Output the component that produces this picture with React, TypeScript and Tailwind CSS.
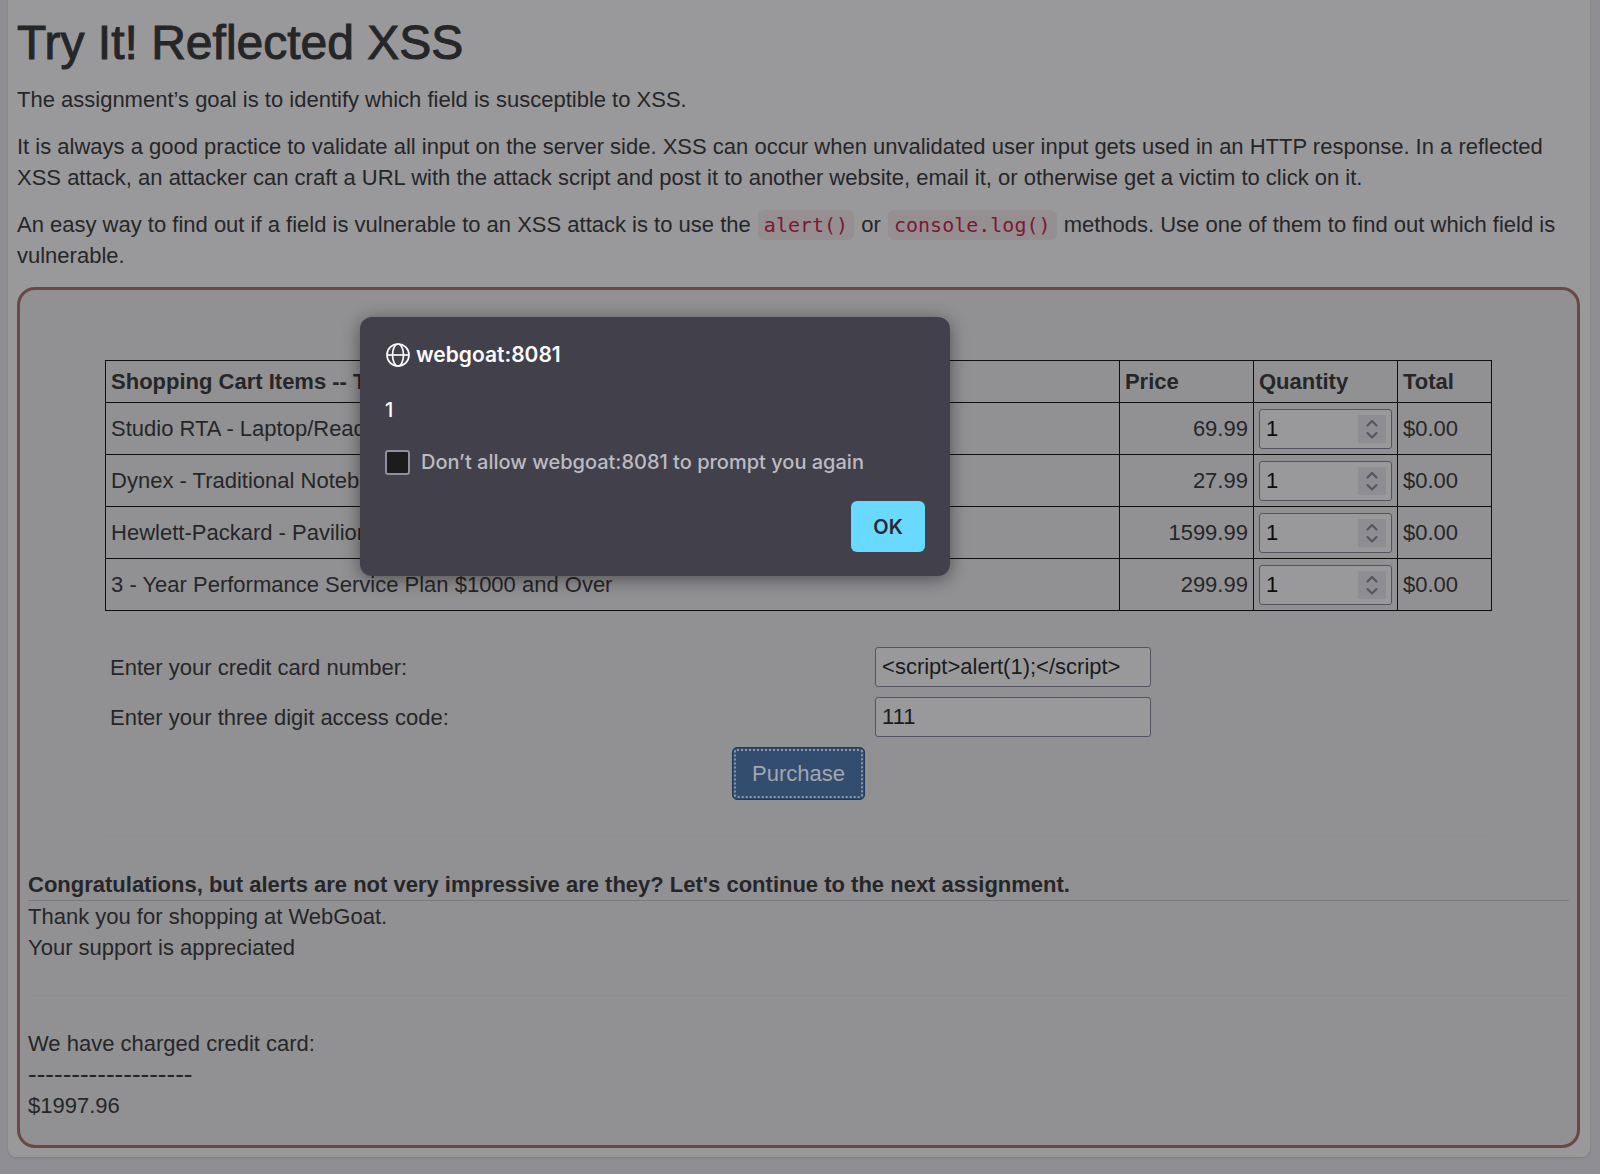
import React, { useState } from 'react';

interface CartItem {
  name: string;
  price: string;
}

const cartItems: CartItem[] = [
  { name: 'Studio RTA - Laptop/Reading Cart with Tilting Surface - Cherry', price: '69.99' },
  { name: 'Dynex - Traditional Notebook Case', price: '27.99' },
  { name: 'Hewlett-Packard - Pavilion Notebook with Intel Centrino', price: '1599.99' },
  { name: '3 - Year Performance Service Plan $1000 and Over', price: '299.99' },
];

const Code: React.FC<{ children: React.ReactNode }> = ({ children }) => (
  <code className="mx-px rounded-md bg-[#958f92] px-1.5 py-[3px] font-['DejaVu_Sans_Mono',monospace] text-xl leading-none text-[#7c1735]">
    {children}
  </code>
);

const QuantityInput: React.FC<{ label: string }> = ({ label }) => (
  <div className="flex h-10 items-center rounded-[3px] border border-[#55535f] bg-[#99999b] pr-[5px] pl-1.5">
    <input
      type="number"
      aria-label={label}
      defaultValue={1}
      className="w-0 flex-1 appearance-none bg-transparent text-[#0c0c0d] outline-none [-moz-appearance:textfield] [&::-webkit-inner-spin-button]:appearance-none"
    />
    <svg className="size-7 bg-[#8e8d93]" viewBox="0 0 28 28" fill="none" stroke="#55535f" strokeWidth="2">
      <path d="M9.5 10.5l4.5-4.5 4.5 4.5M9.5 18l4.5 4.5 4.5-4.5" strokeLinecap="round" strokeLinejoin="round" />
    </svg>
  </div>
);

const CartTable: React.FC = () => (
  <table className="mx-auto w-[90%] table-fixed border-collapse border border-[#0f0f10]">
    <colgroup>
      <col />
      <col className="w-[134px]" />
      <col className="w-[144px]" />
      <col className="w-[94px]" />
    </colgroup>
    <thead>
      <tr className="h-[42px] text-left">
        {['Shopping Cart Items -- To Buy Now', 'Price', 'Quantity', 'Total'].map((title) => (
          <th key={title} className="border border-[#0f0f10] px-[5px] font-bold">
            {title}
          </th>
        ))}
      </tr>
    </thead>
    <tbody>
      {cartItems.map((item) => (
        <tr key={item.name} className="h-[52px]">
          <td className="border border-[#0f0f10] px-[5px]">{item.name}</td>
          <td className="border border-[#0f0f10] px-[5px] text-right">{item.price}</td>
          <td className="border border-[#0f0f10] px-[5px]">
            <QuantityInput label={`Quantity of ${item.name}`} />
          </td>
          <td className="border border-[#0f0f10] px-[5px]">$0.00</td>
        </tr>
      ))}
    </tbody>
  </table>
);

const PaymentForm: React.FC = () => {
  const fieldClass =
    'h-10 w-[276px] rounded-[3px] border border-[#55535f] bg-[#99999b] px-1.5 text-[#1b1b1c] outline-none';

  return (
    <form className="mx-auto mt-9 w-[90%]" onSubmit={(e) => e.preventDefault()}>
      <div className="grid grid-cols-[765px_1fr] items-center gap-y-2.5 pl-[5px]">
        <label htmlFor="card">Enter your credit card number:</label>
        <input id="card" type="text" defaultValue="<script>alert(1);</script>" className={fieldClass} />
        <label htmlFor="code">Enter your three digit access code:</label>
        <input id="code" type="text" defaultValue="111" className={fieldClass} />
      </div>
      <div className="mt-2.5 text-center">
        <button
          type="submit"
          className="h-[53px] rounded-[5px] border border-[#1f3a60] bg-[#334d70] p-px text-[#a3a6ac]"
        >
          <span className="flex h-full items-center rounded-[3px] border-2 border-dotted border-[#8c97a8] px-4">
            Purchase
          </span>
        </button>
      </div>
    </form>
  );
};

const GlobeIcon: React.FC = () => (
  <svg className="size-6" viewBox="0 0 24 24" fill="none" stroke="#fbfbfe" strokeWidth="1.7">
    <circle cx="12" cy="12" r="11" />
    <ellipse cx="12" cy="12" rx="5.5" ry="11" />
    <path d="M1 12h22" />
  </svg>
);

const AlertDialog: React.FC<{ onClose: () => void }> = ({ onClose }) => (
  <div
    role="dialog"
    aria-label="webgoat:8081"
    className="absolute top-[317px] left-[360px] flex h-[259px] w-[590px] flex-col rounded-xl bg-[#42404b] px-[25px] pt-[25px] pb-6 font-[Inter,sans-serif] text-xl leading-[26px] text-[#fbfbfe] shadow-[0_3px_18px_rgba(0,0,0,0.45)]"
  >
    <div className="flex items-center gap-1.5 pl-px text-[21px] font-semibold">
      <GlobeIcon />
      webgoat:8081
    </div>
    <p className="mt-[29px] font-medium">1</p>
    <label className="mt-[26px] flex items-center gap-[11px] text-[#bcbbc1]">
      <input
        type="checkbox"
        className="size-[25px] appearance-none rounded-[3px] border-2 border-[#8f8f9d] bg-[#1c1c1c] checked:bg-[#6ad9ff]"
      />
      <span className="font-medium">Don’t allow webgoat:8081 to prompt you again</span>
    </label>
    <button
      type="button"
      onClick={onClose}
      className="mt-auto h-[51px] w-[74px] self-end rounded-md bg-[#69d9ff] text-xl font-semibold text-[#2b2a33]"
    >
      OK
    </button>
  </div>
);

export default function App() {
  const [dialogOpen, setDialogOpen] = useState(true);

  return (
    <div className="relative min-h-screen bg-[#8f8e94] pr-2.5 pb-4 pl-2 font-['Liberation_Sans',Arial,sans-serif] text-[22px] leading-[31px] text-[#262628]">
      <main className="rounded-b-lg bg-[#99999b] pt-[18px] pr-2.5 pb-[9px] pl-[9px] shadow-sm">
        <h1 className="text-5xl leading-[50px] [-webkit-text-stroke:1px]">Try It! Reflected XSS</h1>
        <div className="mt-4 space-y-4">
          <p>The assignment’s goal is to identify which field is susceptible to XSS.</p>
          <p>
            It is always a good practice to validate all input on the server side. XSS can occur when unvalidated user
            input gets used in an HTTP response. In a reflected XSS attack, an attacker can craft a URL with the attack
            script and post it to another website, email it, or otherwise get a victim to click on it.
          </p>
          <p>
            An easy way to find out if a field is vulnerable to an XSS attack is to use the <Code>alert()</Code> or{' '}
            <Code>console.log()</Code> methods. Use one of them to find out which field is vulnerable.
          </p>
        </div>

        <section className="mt-4 rounded-[18px] border-3 border-[#6b4747] bg-[#919193] px-2 pt-[70px] pb-6">
          <CartTable />
          <PaymentForm />
          <hr className="mx-auto mt-9 w-[90%] border-[#8e8e90]" />
          <p className="mt-8 border-b border-[#7b7b7f] font-bold">
            Congratulations, but alerts are not very impressive are they? Let's continue to the next assignment.
          </p>
          <p>
            Thank you for shopping at WebGoat.
            <br />
            Your support is appreciated
          </p>
          <hr className="my-8 border-[#8d8d8f]" />
          <p>We have charged credit card:</p>
          <p className="text-[26px] leading-[31px]">-------------------</p>
          <p>$1997.96</p>
        </section>
      </main>
      {dialogOpen && <AlertDialog onClose={() => setDialogOpen(false)} />}
    </div>
  );
}
